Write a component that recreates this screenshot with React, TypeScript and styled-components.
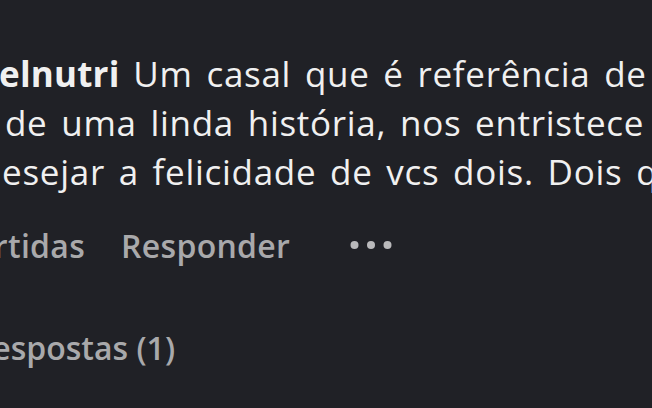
import React from "react";
import styled, { createGlobalStyle } from "styled-components";

const Global = createGlobalStyle`
  html, body {
    margin: 0;
    padding: 0;
    background: #202126;
    overflow: hidden;
  }
  #root {
    width: 652px;
    height: 408px;
  }
`;

const Viewport = styled.div`
  width: 652px;
  height: 408px;
  overflow: hidden;
  background: #202126;
  font-family: "Open Sans", "Noto Sans", sans-serif;
  display: flex;
  flex-direction: column;
`;

const CommentText = styled.div`
  padding-top: 49px;
  font-size: 35px;
  line-height: 49px;
  letter-spacing: 0.7px;
  word-spacing: 4px;
  color: #f0f0f0;
  display: flex;
  flex-direction: column;
`;

const Line = styled.div<{ $indent: number }>`
  white-space: nowrap;
  margin-left: ${(p) => p.$indent}px;
`;

const Username = styled.span`
  font-weight: 700;
  letter-spacing: 0.2px;
`;

const Actions = styled.div`
  margin-top: 29px;
  display: flex;
  align-items: center;
  margin-left: -43px;
  font-size: 32px;
  font-weight: 600;
  letter-spacing: 0.3px;
  color: #a9a9ab;
  white-space: nowrap;
  height: 40px;
`;

const ActionLabel = styled.span<{ $gap: number }>`
  margin-right: ${(p) => p.$gap}px;
`;

const More = styled.svg`
  display: block;
`;

const Replies = styled.div`
  margin-top: 61px;
  margin-left: -82px;
  font-size: 32px;
  font-weight: 600;
  color: #a9a9ab;
  white-space: nowrap;
`;

export default function App() {
  return (
    <>
      <Global />
      <Viewport>
        <CommentText>
          <Line $indent={-1}>
            <Username>elnutri</Username> Um casal que é referência de amor
          </Line>
          <Line $indent={5}>de uma linda história, nos entristece e</Line>
          <Line $indent={-20}>desejar a felicidade de vcs dois. Dois que</Line>
        </CommentText>
        <Actions>
          <ActionLabel $gap={36}>curtidas</ActionLabel>
          <ActionLabel $gap={60}>Responder</ActionLabel>
          <More width="42" height="10" viewBox="0 0 42 10">
            <circle cx="4.5" cy="5" r="4" fill="#b9b9bb" />
            <circle cx="21" cy="5" r="4" fill="#b9b9bb" />
            <circle cx="37.5" cy="5" r="4" fill="#b9b9bb" />
          </More>
        </Actions>
        <Replies>Ver respostas (1)</Replies>
      </Viewport>
    </>
  );
}
